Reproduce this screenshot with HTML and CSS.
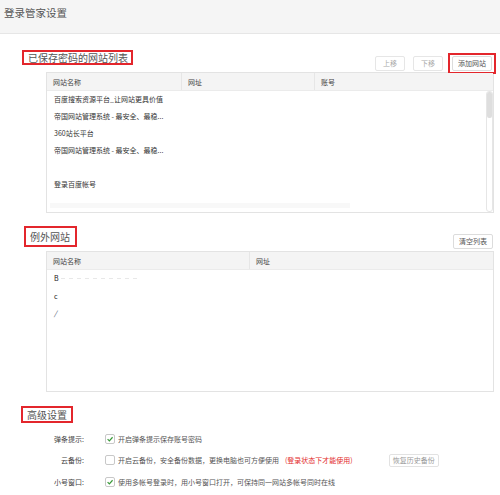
FILE: index.html
```html
<!DOCTYPE html>
<html lang="zh-CN">
<head>
<meta charset="utf-8">
<title>登录管家设置</title>
<link rel="stylesheet" href="styles.css">
</head>
<body>
<div class="header">登录管家设置</div>

<div class="section">
  <div class="sec-row row1">
    <div class="sec-title t1">已保存密码的网站列表</div>
    <div class="btns">
      <button class="btn dis">上移</button>
      <button class="btn dis">下移</button>
      <span class="hlbox"><button class="btn">添加网站</button></span>
    </div>
  </div>
  <div class="table">
    <div class="thead">
      <div class="c c1">网站名称</div>
      <div class="c c2">网址</div>
      <div class="c c3">账号</div>
    </div>
    <div class="tbody">
      <div class="tr">百度搜索资源平台_让网站更具价值</div>
      <div class="tr">帝国网站管理系统 - 最安全、最稳...</div>
      <div class="tr">360站长平台</div>
      <div class="tr">帝国网站管理系统 - 最安全、最稳...</div>
      <div class="tr"></div>
      <div class="tr">登录百度帐号</div>
      <div class="hscroll"></div>
      <div class="vscroll"><div class="thumb"></div></div>
    </div>
  </div>
</div>

<div class="section">
  <div class="sec-row row2">
    <div class="sec-title t2">例外网站</div>
    <div class="btns b2">
      <button class="btn">清空列表</button>
    </div>
  </div>
  <div class="table">
    <div class="thead">
      <div class="c d1">网站名称</div>
      <div class="c d2">网址</div>
    </div>
    <div class="tbody">
      <div class="tr r2"><span class="g">B</span><span class="blur">　　　　　　　　　　　</span></div>
      <div class="tr r2"><span class="g">c</span></div>
      <div class="tr r2"><span class="g slash">/</span></div>
    </div>
  </div>
</div>

<div class="section adv">
  <div class="sec-title t3">高级设置</div>
  <div class="opts">
    <div class="opt">
      <div class="lbl">弹条提示:</div>
      <span class="cb on"><svg viewBox="0 0 10 10"><path d="M2 5.2 L4.2 7.4 L8.2 2.8" fill="none" stroke="#3a9a3a" stroke-width="1.5"/></svg></span>
      <span class="txt">开启弹条提示保存账号密码</span>
    </div>
    <div class="opt">
      <div class="lbl">云备份:</div>
      <span class="cb"></span>
      <span class="txt">开启云备份，安全备份数据，更换电脑也可方便使用</span>
      <span class="red">(登录状态下才能使用)</span>
      <button class="btn small">恢复历史备份</button>
    </div>
    <div class="opt">
      <div class="lbl">小号窗口:</div>
      <span class="cb on"><svg viewBox="0 0 10 10"><path d="M2 5.2 L4.2 7.4 L8.2 2.8" fill="none" stroke="#3a9a3a" stroke-width="1.5"/></svg></span>
      <span class="txt">使用多帐号登录时，用小号窗口打开，可保持同一网站多帐号同时在线</span>
    </div>
  </div>
</div>
</body>
</html>
```

FILE: styles.css
```css
* { box-sizing: border-box; }
html, body { margin: 0; padding: 0; }
body {
  width: 500px;
  height: 495px;
  background: #fff;
  font-family: "Noto Sans CJK SC", "Noto Sans", sans-serif;
  color: #333;
  overflow: hidden;
}
.header {
  height: 34px;
  background: #f5f5f5;
  border-bottom: 1px solid #e6e6e6;
  font-size: 10.5px;
  line-height: 12px;
  padding: 7px 0 0 4px;
  color: #555;
}
.section { margin: 0; }
.sec-row {
  display: flex;
  justify-content: space-between;
  align-items: flex-start;
  padding-right: 4px;
}
.row1 { margin-top: 16px; height: 22px; }
.row2 { margin-top: 13px; height: 25px; padding-right: 7px; }
.sec-title {
  display: inline-flex;
  align-items: center;
  border: 2px solid #e3262c;
  font-size: 10px;
  color: #555;
  padding: 0 3px 0 4px;
  white-space: nowrap;
}
.t1 { margin-left: 22px; height: 15px; }
.t2 { margin-left: 24px; height: 21px; padding-right: 5px; }
.t3 { margin-left: 21px; height: 17px; margin-top: 14px; padding-right: 4px; }
.btns {
  display: flex;
  align-items: flex-start;
  gap: 8px;
  margin-top: 6px;
}
.b2 { margin-top: 8px; }
.btn {
  font-family: inherit;
  font-size: 7px;
  line-height: 13px;
  height: 15px;
  padding: 0 5px;
  background: #fff;
  border: 1px solid #dcdcdc;
  border-radius: 2px;
  color: #555;
  margin: 0;
}
.btn.dis { color: #aaa; border-color: #e6e6e6; padding: 0 7px; }
.hlbox {
  display: inline-flex;
  border: 2px solid #e3262c;
  padding: 1px 2px;
  margin-top: -3px;
  margin-left: -3px;
}
.table {
  margin-left: 46px;
  width: 448px;
  height: 141px;
  border: 1px solid #e3e3e3;
  display: flex;
  flex-direction: column;
}
.thead {
  display: flex;
  height: 18px;
  background: #f4f4f4;
  border-bottom: 1px solid #ebebeb;
  font-size: 7px;
  color: #444;
}
.c {
  display: flex;
  align-items: center;
  padding-left: 6px;
  border-right: 1px solid #e6e6e6;
}
.c:last-child { border-right: none; }
.c1 { width: 135px; }
.c2 { width: 133px; }
.c3 { flex: 1; }
.d1 { width: 203px; }
.d2 { flex: 1; }
.tbody {
  position: relative;
  flex: 1;
}
.tr {
  height: 17px;
  font-size: 7px;
  line-height: 17px;
  padding-left: 7px;
  color: #333;
  white-space: nowrap;
}
.r2 { height: 17.5px; }
.g { font-size: 7px; color: #222; }
.slash { font-style: italic; color: #345; }
.blur {
  color: transparent;
  background: repeating-linear-gradient(90deg, #e8e8e8 0 4px, transparent 4px 8px);
  background-size: 100% 1px;
  background-repeat: no-repeat;
  background-position: 0 50%;
  margin-left: 2px;
  font-size: 7px;
}
.hscroll {
  position: absolute;
  left: 3px;
  top: 112px;
  width: 300px;
  height: 5px;
  background: #f8f8f8;
}
.vscroll {
  position: absolute;
  right: 0;
  top: 0;
  bottom: 0;
  width: 7px;
  border: 1px solid #e6e6e6;
  border-radius: 3px;
  background: #fff;
}
.thumb {
  height: 26px;
  background: #dedede;
  border-radius: 2px;
}
.opts {
  display: flex;
  flex-direction: column;
  margin-top: 4px;
}
.opt {
  display: flex;
  align-items: center;
  height: 21.5px;
  font-size: 7px;
  color: #555;
  white-space: nowrap;
}
.lbl {
  width: 84px;
  text-align: right;
  color: #444;
}
.cb {
  width: 10px;
  height: 10px;
  margin-left: 21px;
  margin-right: 3px;
  border: 1px solid #c8c8c8;
  border-radius: 2px;
  background: #fff;
  display: inline-flex;
}
.cb svg { width: 8px; height: 8px; }
.txt { color: #555; }
.red { color: #e32b2b; margin-left: 6px; }
.btn.small {
  margin-left: 36px;
  height: 13px;
  line-height: 11px;
  padding: 0 3px;
  color: #999;
  border-color: #e2e2e2;
}
```
